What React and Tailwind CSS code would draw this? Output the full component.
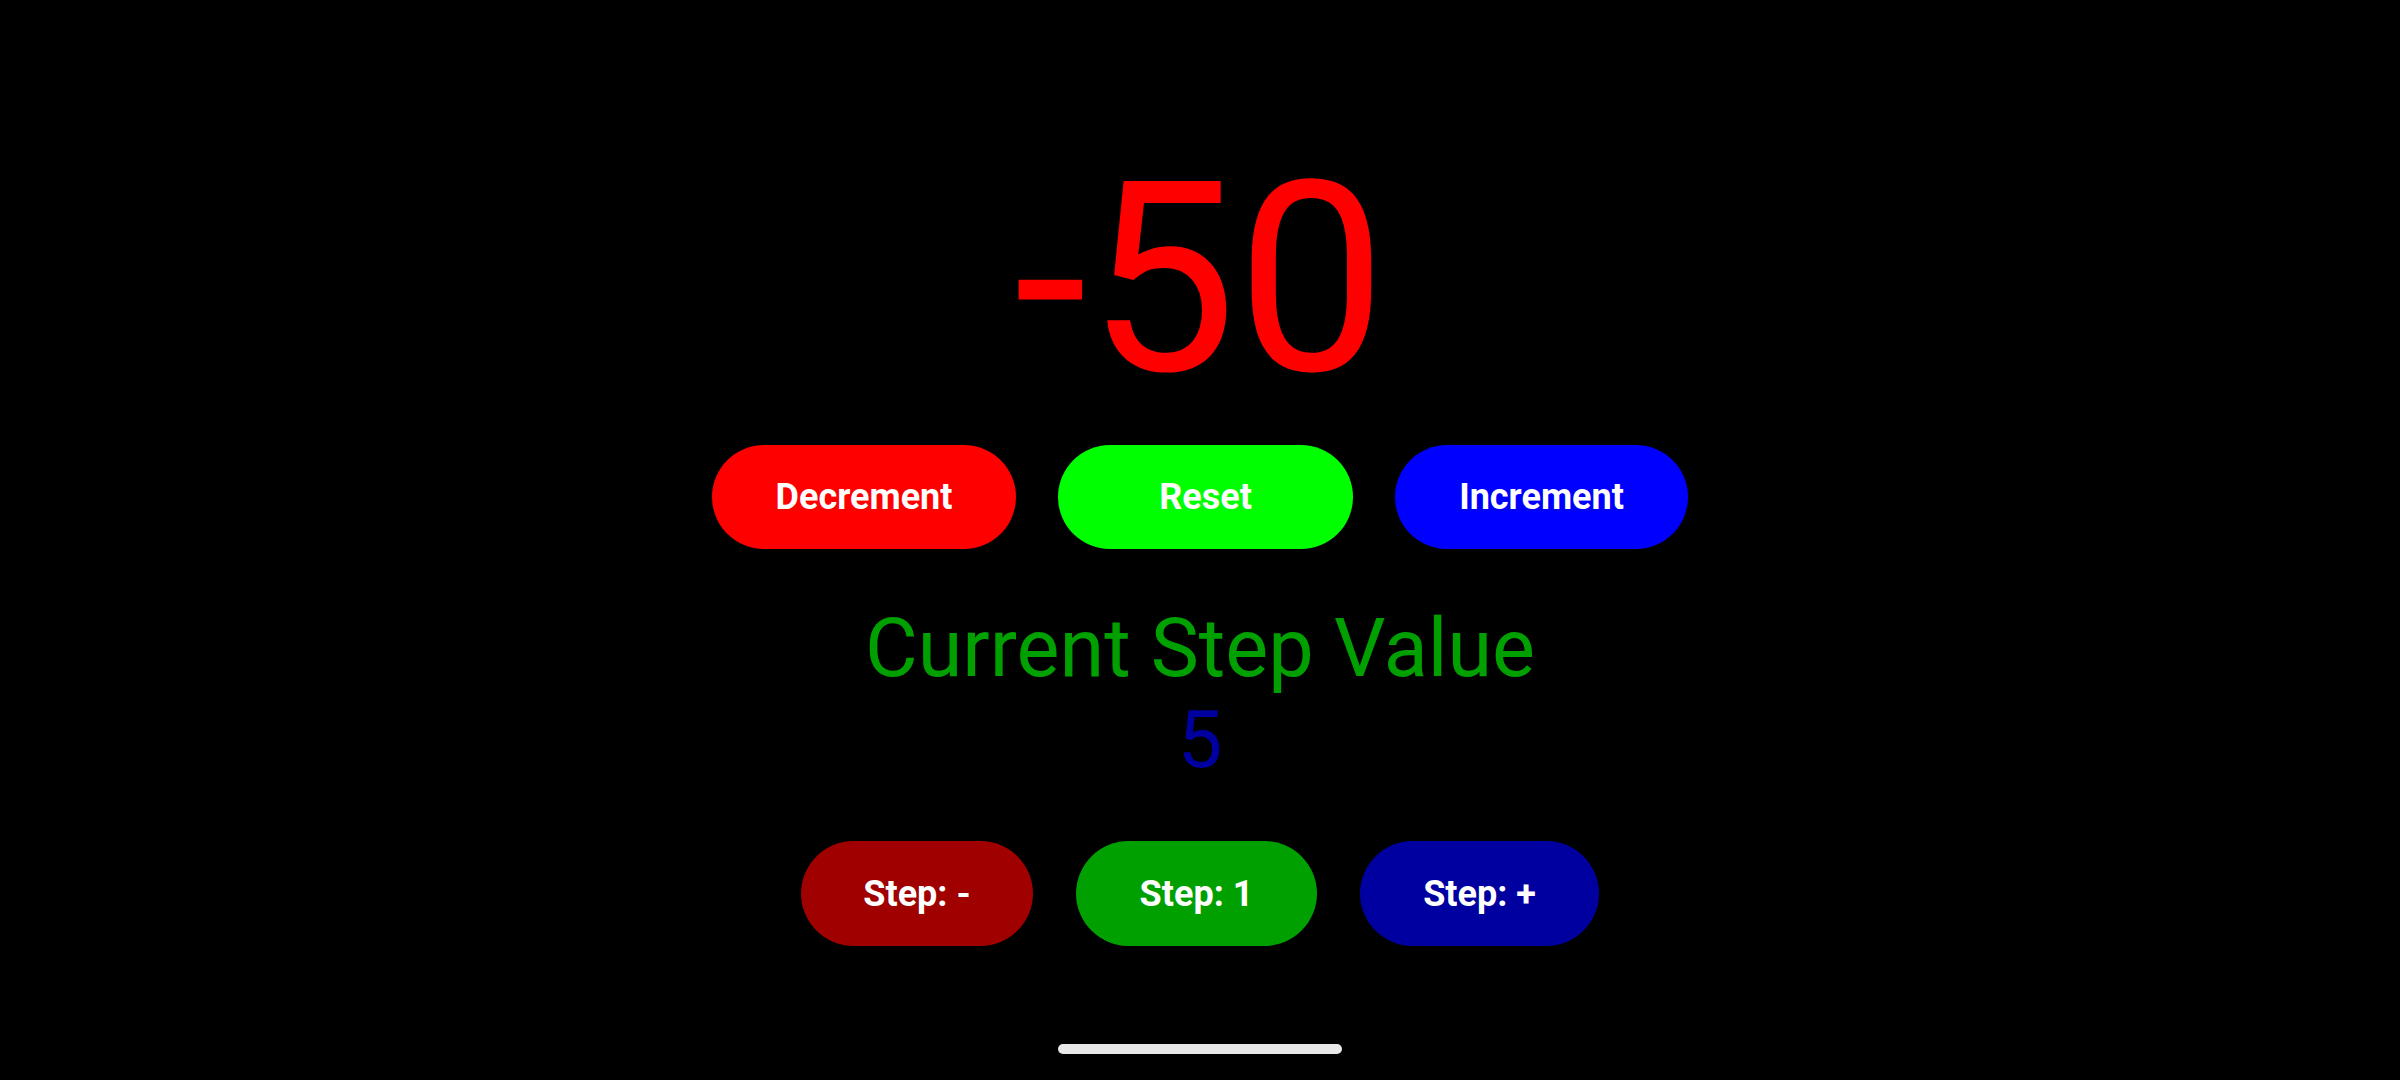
export default function App() {
  const font = { fontFamily: 'Roboto, "Noto Sans", sans-serif' };
  return (
    <div className="relative w-[2400px] h-[1080px] bg-black overflow-hidden" style={font}>
      <div className="flex flex-col items-center pt-[146px]">
        <div className="text-[266px] leading-none text-[#ff0000]">-50</div>
        <div className="mt-[33px] flex gap-[42px]">
          <button className="w-[304px] h-[104px] rounded-full bg-[#ff0000] text-white text-[36px] font-bold">Decrement</button>
          <button className="w-[295px] h-[104px] rounded-full bg-[#00ff00] text-white text-[36px] font-bold">Reset</button>
          <button className="w-[293px] h-[104px] rounded-full bg-[#0000ff] text-white text-[36px] font-bold">Increment</button>
        </div>
        <div className="mt-[59px] text-[81px] leading-none text-[#00a000]">Current Step Value</div>
        <div className="mt-[11px] text-[80px] leading-none text-[#0000a0]">5</div>
        <div className="mt-[61px] flex gap-[43px]">
          <button className="w-[232px] h-[105px] rounded-full bg-[#a00000] text-white text-[36px] font-bold">Step: -</button>
          <button className="w-[241px] h-[105px] rounded-full bg-[#00a000] text-white text-[36px] font-bold">Step: 1</button>
          <button className="w-[239px] h-[105px] rounded-full bg-[#0000a0] text-white text-[36px] font-bold">Step: +</button>
        </div>
      </div>
      <div className="absolute left-[1058px] top-[1044px] w-[284px] h-[10px] rounded-full bg-[#e8e8e8]" />
    </div>
  );
}
